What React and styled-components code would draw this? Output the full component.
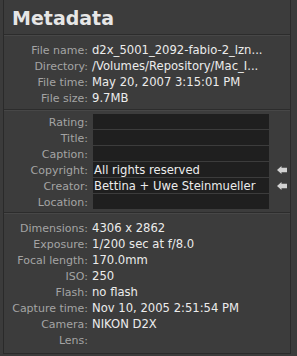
import React from "react";
import styled, { createGlobalStyle } from "styled-components";

const GlobalStyle = createGlobalStyle`
   body {
      margin: 0;
      background: #3b3b3b;
      font-family: "DejaVu Sans", Verdana, sans-serif;
   }
`;

const Panel = styled.div`
   width: 286px;
   height: 353px;
   margin-left: 3px;
   background: #3c3c3c;
   border-left: 1px solid #2a2a2a;
   border-right: 1px solid #2a2a2a;
   border-bottom: 1px solid #2a2a2a;
   display: flex;
   flex-direction: column;
`;

const Header = styled.h1`
   margin: 0;
   height: 35px;
   padding-left: 8px;
   display: flex;
   align-items: center;
   font-size: 19px;
   font-weight: bold;
   color: #e6e6e6;
   border-bottom: 1px solid #2c2c2c;
   box-shadow: 0 1px 0 #474747;
   box-sizing: border-box;
   padding-top: 2px;
`;

const Section = styled.div`
   display: flex;
   flex-direction: column;
   padding: ${(p) => p.$pad};
   border-bottom: ${(p) => (p.$last ? "none" : "1px solid #2c2c2c")};
   box-shadow: ${(p) => (p.$last ? "none" : "0 1px 0 #474747")};
`;

const Row = styled.div`
   display: flex;
   align-items: center;
   height: 16px;
   font-size: 11px;
`;

const Label = styled.span`
   width: 84px;
   flex-shrink: 0;
   text-align: right;
   color: #a4a4a4;
   white-space: nowrap;
`;

const Value = styled.span`
   margin-left: 4px;
   color: #ececec;
   font-size: 11.6px;
   white-space: nowrap;
`;

const Field = styled.div`
   margin-left: 5px;
   width: 176px;
   height: 15px;
   align-self: flex-start;
   background: #1f1f1f;
   color: #ececec;
   font-size: 11.6px;
   display: flex;
   align-items: center;
   padding-left: 1px;
   box-sizing: border-box;
   white-space: nowrap;
`;

const ArrowSlot = styled.div`
   width: 10px;
   height: 8px;
   margin-left: 8px;
   display: flex;
   margin-top: -1px;
`;

function Arrow() {
   return (
      <svg width="10" height="8" viewBox="0 0 10 8">
         <path d="M0 4 L4.5 0 L4.5 1.8 L10 1.8 L10 6.2 L4.5 6.2 L4.5 8 Z" fill="#d2d2d2" />
      </svg>
   );
}

const fileInfo = [
   ["File name:", "d2x_5001_2092-fabio-2_lzn..."],
   ["Directory:", "/Volumes/Repository/Mac_I..."],
   ["File time:", "May 20, 2007 3:15:01 PM"],
   ["File size:", "9.7MB"],
];

const editable = [
   ["Rating:", ""],
   ["Title:", ""],
   ["Caption:", ""],
   ["Copyright:", "All rights reserved", true],
   ["Creator:", "Bettina + Uwe Steinmueller", true],
   ["Location:", ""],
];

const exif = [
   ["Dimensions:", "4306 x 2862"],
   ["Exposure:", "1/200 sec at f/8.0"],
   ["Focal length:", "170.0mm"],
   ["ISO:", "250"],
   ["Flash:", "no flash"],
   ["Capture time:", "Nov 10, 2005 2:51:54 PM"],
   ["Camera:", "NIKON D2X"],
   ["Lens:", ""],
];

export default function App() {
   return (
      <>
         <GlobalStyle />
         <Panel>
            <Header>Metadata</Header>
            <Section $pad="7px 0 3px">
               {fileInfo.map(([l, v]) => (
                  <Row key={l}>
                     <Label>{l}</Label>
                     <Value>{v}</Value>
                  </Row>
               ))}
            </Section>
            <Section $pad="4px 0 2px">
               {editable.map(([l, v, arrow]) => (
                  <Row key={l}>
                     <Label>{l}</Label>
                     <Field>{v}</Field>
                     {arrow && (
                        <ArrowSlot>
                           <Arrow />
                        </ArrowSlot>
                     )}
                  </Row>
               ))}
            </Section>
            <Section $pad="7px 0 0" $last>
               {exif.map(([l, v]) => (
                  <Row key={l}>
                     <Label>{l}</Label>
                     <Value>{v}</Value>
                  </Row>
               ))}
            </Section>
         </Panel>
      </>
   );
}
